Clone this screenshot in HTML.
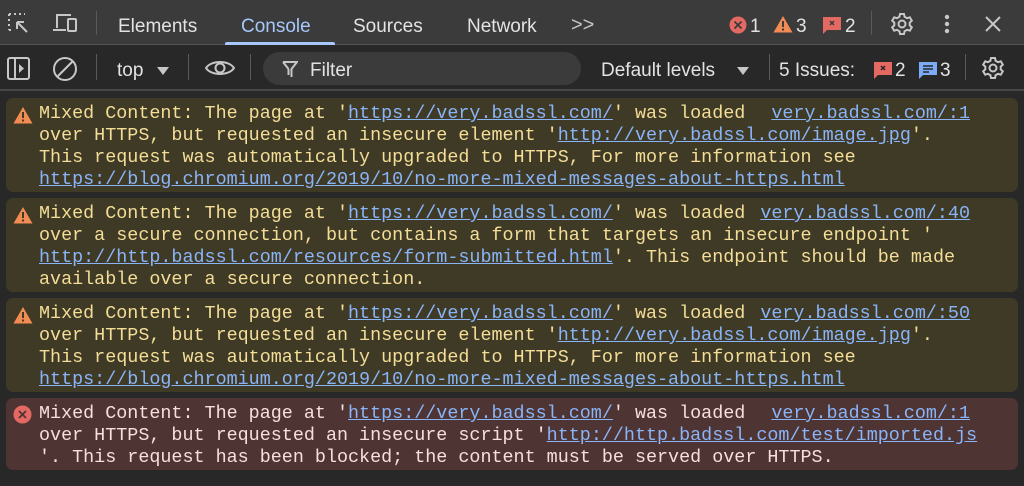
<!DOCTYPE html>
<html><head><meta charset="utf-8"><style>
*{margin:0;padding:0;box-sizing:border-box}
body{width:1024px;height:486px;background:#282828;overflow:hidden;font-family:"Liberation Sans",sans-serif;position:relative}
.top{position:absolute;left:0;top:0;width:1024px;height:45px;background:#3b3b3b;border-bottom:1px solid #555}
.bar2{position:absolute;left:0;top:46px;width:1024px;height:45px;background:#282828;border-bottom:2px solid #474747}
.t{position:absolute;color:#e3e3e3;font-size:19px}
.sep{position:absolute;width:1px;background:#5a5a5a}
.row{position:absolute;left:6px;width:1012px;border-radius:7px;padding-top:5px;font-family:"Liberation Mono",monospace;font-size:18.4px;line-height:22px}
.w{background:#3f3a25;color:#f3dd97}
.e{background:#4e3433;color:#f9dedc}
.l{white-space:pre;padding-left:33px;height:22px}
a{color:#8ab4f8;text-decoration:underline}
.src{position:absolute;right:48px;top:5px}
.ic{position:absolute;left:7px;top:8px}
</style></head><body>
<div class="top">
<svg style="position:absolute;left:7px;top:12px" width="24" height="22" viewBox="0 0 24 22" fill="none" stroke="#c7c7c7" stroke-width="2"><path d="M2 2h16M2 2v16M2 18h4" stroke-dasharray="2 3"/><path d="M10 10l10 10M10 10h7M10 10v7"/></svg>
<svg style="position:absolute;left:52px;top:12px" width="28" height="22" viewBox="0 0 28 22" fill="none" stroke="#c7c7c7" stroke-width="2"><path d="M5 16V3h14"/><path d="M1 18h13"/><rect x="16" y="7" width="8" height="12" rx="1"/></svg>
<div class="sep" style="left:96px;top:11px;height:24px"></div>
<div class="t" style="left:118px;top:16px">Elements</div>
<div class="t" style="left:241px;top:16px;color:#a8c7fa">Console</div>
<div style="position:absolute;left:225px;top:42px;width:110px;height:3px;background:#a8c7fa;border-radius:2px 2px 0 0"></div>
<div class="t" style="left:353px;top:16px">Sources</div>
<div class="t" style="left:467px;top:16px">Network</div>
<div class="t" style="left:571px;top:14px;font-size:20px;color:#c7c7c7">&gt;&gt;</div>
<svg style="position:absolute;left:729px;top:16px" width="18" height="18"><circle cx="9" cy="9" r="8.5" fill="#e46962"/><path d="M5.5 5.5l7 7M12.5 5.5l-7 7" stroke="#3b3b3b" stroke-width="1.8"/></svg>
<div class="t" style="left:750px;top:16px">1</div>
<svg style="position:absolute;left:773px;top:15px" width="20" height="18"><path d="M10 1L19.5 17.5H0.5Z" fill="#f28b54"/><rect x="9" y="6" width="2" height="6" fill="#3b3b3b"/><rect x="9" y="13.5" width="2" height="2" fill="#3b3b3b"/></svg>
<div class="t" style="left:796px;top:16px">3</div>
<svg style="position:absolute;left:822px;top:16px" width="20" height="18"><path d="M1 1h18v13H5l-4 4z" fill="#e46962"/><path d="M8 5l4 4M12 5l-4 4" stroke="#3b3b3b" stroke-width="1.5"/></svg>
<div class="t" style="left:845px;top:16px">2</div>
<div class="sep" style="left:871px;top:11px;height:24px"></div>
<svg style="position:absolute;left:890px;top:12px" width="24" height="24" viewBox="0 0 24 24" fill="none" stroke="#c7c7c7" stroke-width="2"><circle cx="12" cy="12" r="3.5"/><path d="M10 2h4l.6 2.8 2.5 1.4 2.7-.9 2 3.4-2.1 1.9v2.8l2.1 1.9-2 3.4-2.7-.9-2.5 1.4L14 22h-4l-.6-2.8-2.5-1.4-2.7.9-2-3.4 2.1-1.9v-2.8L2.2 8.7l2-3.4 2.7.9 2.5-1.4z"/></svg>
<svg style="position:absolute;left:943px;top:13px" width="8" height="22"><circle cx="4" cy="4" r="2.2" fill="#c7c7c7"/><circle cx="4" cy="11" r="2.2" fill="#c7c7c7"/><circle cx="4" cy="18" r="2.2" fill="#c7c7c7"/></svg>
<svg style="position:absolute;left:985px;top:16px" width="16" height="16"><path d="M1 1l14 14M15 1L1 15" stroke="#c7c7c7" stroke-width="2"/></svg>
</div>
<div class="bar2">
<svg style="position:absolute;left:7px;top:11px" width="24" height="24" fill="none" stroke="#c7c7c7" stroke-width="2"><rect x="1" y="1" width="21" height="21" rx="2"/><path d="M8 1v21"/><path d="M12 7l5 4.5-5 4.5z" fill="#c7c7c7" stroke="none"/></svg>
<svg style="position:absolute;left:52px;top:11px" width="26" height="26" fill="none" stroke="#c7c7c7" stroke-width="2"><circle cx="13" cy="12" r="11"/><path d="M5 20L21 4"/></svg>
<div class="sep" style="left:96px;top:8px;height:26px"></div>
<div class="t" style="left:117px;top:14px">top</div>
<svg style="position:absolute;left:157px;top:21px" width="12" height="9"><path d="M0 0h12L6 8z" fill="#c7c7c7"/></svg>
<div class="sep" style="left:188px;top:8px;height:26px"></div>
<svg style="position:absolute;left:204px;top:11px" width="32" height="22" fill="none" stroke="#c7c7c7" stroke-width="2"><path d="M2 11C7 3 25 3 30 11 25 19 7 19 2 11z"/><circle cx="16" cy="11" r="4.5"/></svg>
<div class="sep" style="left:250px;top:8px;height:26px"></div>
<div style="position:absolute;left:263px;top:6px;width:318px;height:33px;background:#3b3b3b;border-radius:17px"></div>
<svg style="position:absolute;left:282px;top:15px" width="16" height="18" fill="none" stroke="#c7c7c7" stroke-width="2"><path d="M1 1h14L9.5 8v8M6.5 8V14M1 1l5.5 7"/></svg>
<div class="t" style="left:310px;top:14px">Filter</div>
<div class="t" style="left:601px;top:14px">Default levels</div>
<svg style="position:absolute;left:737px;top:21px" width="12" height="9"><path d="M0 0h12L6 8z" fill="#c7c7c7"/></svg>
<div class="sep" style="left:769px;top:8px;height:26px"></div>
<div class="t" style="left:779px;top:14px">5 Issues:</div>
<svg style="position:absolute;left:873px;top:15px" width="20" height="18"><path d="M1 1h18v13H5l-4 4z" fill="#e46962"/><path d="M8 5l4 4M12 5l-4 4" stroke="#282828" stroke-width="1.5"/></svg>
<div class="t" style="left:895px;top:14px">2</div>
<svg style="position:absolute;left:918px;top:15px" width="20" height="18"><path d="M1 1h18v13H5l-4 4z" fill="#7cacf8"/><path d="M5 5h10M5 8h10M5 11h6" stroke="#282828" stroke-width="1.5"/></svg>
<div class="t" style="left:940px;top:14px">3</div>
<div class="sep" style="left:965px;top:8px;height:26px"></div>
<svg style="position:absolute;left:981px;top:10px" width="24" height="24" viewBox="0 0 24 24" fill="none" stroke="#c7c7c7" stroke-width="2"><circle cx="12" cy="12" r="3.5"/><path d="M10 2h4l.6 2.8 2.5 1.4 2.7-.9 2 3.4-2.1 1.9v2.8l2.1 1.9-2 3.4-2.7-.9-2.5 1.4L14 22h-4l-.6-2.8-2.5-1.4-2.7.9-2-3.4 2.1-1.9v-2.8L2.2 8.7l2-3.4 2.7.9 2.5-1.4z"/></svg>
</div>

<div class="row w" style="top:98px;height:94px">
<svg class="ic" width="20" height="18"><path d="M10 1L19.5 17.5H0.5Z" fill="#f28b54"/><rect x="9" y="6" width="2" height="6" fill="#3f3a25"/><rect x="9" y="13.5" width="2" height="2" fill="#3f3a25"/></svg>
<a class="src">very.badssl.com/:1</a>
<div class="l">Mixed Content: The page at '<a>https://very.badssl.com/</a>' was loaded</div>
<div class="l">over HTTPS, but requested an insecure element '<a>http://very.badssl.com/image.jpg</a>'.</div>
<div class="l">This request was automatically upgraded to HTTPS, For more information see</div>
<div class="l"><a>https://blog.chromium.org/2019/10/no-more-mixed-messages-about-https.html</a></div>
</div>
<div class="row w" style="top:198px;height:94px">
<svg class="ic" width="20" height="18"><path d="M10 1L19.5 17.5H0.5Z" fill="#f28b54"/><rect x="9" y="6" width="2" height="6" fill="#3f3a25"/><rect x="9" y="13.5" width="2" height="2" fill="#3f3a25"/></svg>
<a class="src">very.badssl.com/:40</a>
<div class="l">Mixed Content: The page at '<a>https://very.badssl.com/</a>' was loaded</div>
<div class="l">over a secure connection, but contains a form that targets an insecure endpoint '</div>
<div class="l"><a>http://http.badssl.com/resources/form-submitted.html</a>'. This endpoint should be made</div>
<div class="l">available over a secure connection.</div>
</div>
<div class="row w" style="top:298px;height:94px">
<svg class="ic" width="20" height="18"><path d="M10 1L19.5 17.5H0.5Z" fill="#f28b54"/><rect x="9" y="6" width="2" height="6" fill="#3f3a25"/><rect x="9" y="13.5" width="2" height="2" fill="#3f3a25"/></svg>
<a class="src">very.badssl.com/:50</a>
<div class="l">Mixed Content: The page at '<a>https://very.badssl.com/</a>' was loaded</div>
<div class="l">over HTTPS, but requested an insecure element '<a>http://very.badssl.com/image.jpg</a>'.</div>
<div class="l">This request was automatically upgraded to HTTPS, For more information see</div>
<div class="l"><a>https://blog.chromium.org/2019/10/no-more-mixed-messages-about-https.html</a></div>
</div>
<div class="row e" style="top:398px;height:72px">
<svg class="ic" width="19" height="19" style="top:7px"><circle cx="9.5" cy="9.5" r="9" fill="#e46962"/><path d="M6 6l7 7M13 6l-7 7" stroke="#4e3433" stroke-width="1.8"/></svg>
<a class="src">very.badssl.com/:1</a>
<div class="l">Mixed Content: The page at '<a>https://very.badssl.com/</a>' was loaded</div>
<div class="l">over HTTPS, but requested an insecure script '<a>http://http.badssl.com/test/imported.js</a></div>
<div class="l">'. This request has been blocked; the content must be served over HTTPS.</div>
</div>
</body></html>
